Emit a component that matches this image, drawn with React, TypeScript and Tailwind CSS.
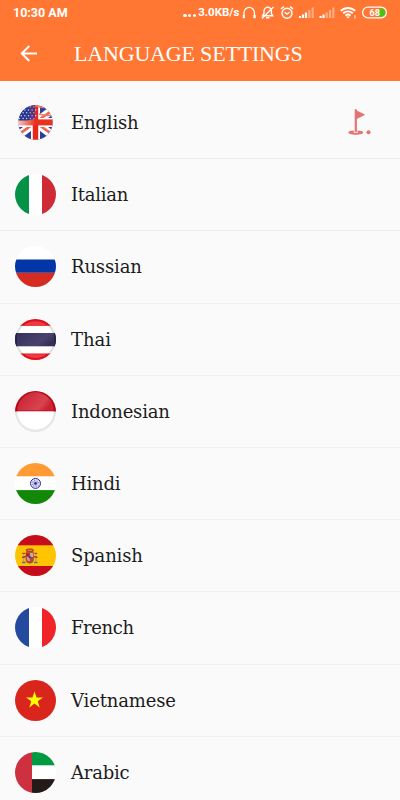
import React from "react";

interface Language {
  name: string;
  flag: React.ReactNode;
  tracking: string;
  selected?: boolean;
}

interface FlagProps {
  id: string;
  r?: number;
  children: React.ReactNode;
}

// Every flag is drawn on a 41x41 canvas and clipped to a circle
const Flag: React.FC<FlagProps> = ({ id, r = 20.5, children }) => (
  <svg width="41" height="41" viewBox="0 0 41 41" className="shrink-0">
    <defs>
      <clipPath id={id}>
        <circle cx="20.5" cy="20.5" r={r} />
      </clipPath>
    </defs>
    <g clipPath={`url(#${id})`}>{children}</g>
  </svg>
);

const STARS = Array.from({ length: 25 }, (_, i) => ({
  x: 4.5 + (i % 5) * 3.6 + (Math.floor(i / 5) % 2) * 1.8,
  y: 5 + Math.floor(i / 5) * 2.9,
}));

const EnglishFlag = () => (
  <Flag id="flag-en" r={17.2}>
    <defs>
      <linearGradient id="en-fade" x1="0" y1="0" x2="1" y2="0">
        <stop offset="0.05" stopColor="#f7cfc5" />
        <stop offset="0.5" stopColor="#e8321f" />
      </linearGradient>
    </defs>
    <rect width="41" height="41" fill="#2b3f9b" />
    <path d="M20.5 20.5 41 5M20.5 20.5 41 36M20.5 20.5 0 36" stroke="#fff" strokeWidth="8" />
    <path d="M20.5 20 41 6M20.5 20.5 41 35M20.5 20.5 0 35" stroke="#f0644f" strokeWidth="2.5" />
    <path d="M20.5 0v41M0 20.5h41" stroke="#fff" strokeWidth="9" />
    <path d="M20.5 0v41" stroke="#e92619" strokeWidth="5.4" />
    <path d="M20 3.5q8 3 17 2M24 12q6 2 14 1" fill="none" stroke="#ef7a6b" strokeWidth="1.6" />
    <rect y="17.4" width="41" height="6" fill="url(#en-fade)" />
    <path d="M3 2h17v15L12 18.5H3Z" fill="#27378f" />
    {STARS.map((s) => (
      <circle key={`${s.x}-${s.y}`} cx={s.x} cy={s.y} r="0.75" fill="#cdd5f4" />
    ))}
    <path d="M15 3h5v14h-5z" fill="#a3355e" opacity="0.35" />
  </Flag>
);

const ItalianFlag = () => (
  <Flag id="flag-it">
    <rect width="41" height="41" fill="#fff" />
    <rect width="14" height="41" fill="#059247" />
    <rect x="27" width="14" height="41" fill="#ce2b37" />
  </Flag>
);

const RussianFlag = () => (
  <Flag id="flag-ru">
    <rect width="41" height="41" fill="#fff" />
    <rect y="13.5" width="41" height="13.3" fill="#0036a7" />
    <rect y="26.8" width="41" height="14.2" fill="#d62b20" />
  </Flag>
);

const ThaiFlag = () => (
  <Flag id="flag-th">
    <defs>
      <linearGradient id="th-shine" x1="0" y1="0" x2="1" y2="0.4">
        <stop offset="0" stopColor="#34305a" />
        <stop offset="0.75" stopColor="#494370" />
        <stop offset="1" stopColor="#383258" />
      </linearGradient>
    </defs>
    <rect width="41" height="41" fill="#fff" />
    <circle cx="20.5" cy="20.5" r="19.5" fill="none" stroke="#dedede" strokeWidth="2" />
    <rect width="41" height="6.8" fill="#df101b" />
    <rect y="34.5" width="41" height="7" fill="#df101b" />
    <path d="M9.5 6A18 18 0 0 1 31.5 6ZM9.5 35.3a18 18 0 0 0 22 0Z" fill="#ef3a46" />
    <rect y="14" width="41" height="13.3" fill="url(#th-shine)" />
    <path d="M1 14v13.3M40 14v13.3" stroke="#292448" strokeWidth="2" />
  </Flag>
);

const IndonesianFlag = () => (
  <Flag id="flag-id">
    <defs>
      <linearGradient id="id-shine" x1="0" y1="0" x2="1" y2="0.4">
        <stop offset="0" stopColor="#c51f31" />
        <stop offset="0.8" stopColor="#d94350" />
        <stop offset="1" stopColor="#cd2435" />
      </linearGradient>
    </defs>
    <rect width="41" height="41" fill="#e6e6e6" />
    <rect width="41" height="20.5" fill="#b90617" />
    <path d="M2.3 19.5a18.2 18.2 0 0 1 36.4 0Z" fill="url(#id-shine)" />
    <path d="M2.3 20.5a18.2 18.2 0 0 0 36.4 0Z" fill="#fff" />
  </Flag>
);

const HindiFlag = () => (
  <Flag id="flag-hi">
    <rect width="41" height="41" fill="#fff" />
    <rect width="41" height="13.3" fill="#ff9a35" />
    <rect y="27.1" width="41" height="14" fill="#138808" />
    <circle cx="20.5" cy="20.4" r="5" fill="#eeeefa" stroke="#2a2a9c" />
    <circle cx="20.5" cy="20.4" r="2.5" fill="none" stroke="#8585c9" strokeWidth="3" strokeDasharray="0.6 0.7" />
    <circle cx="20.5" cy="20.4" r="1.3" fill="#2a2a9c" />
  </Flag>
);

const SpanishFlag = () => (
  <Flag id="flag-es">
    <rect width="41" height="41" fill="#ffc400" />
    <rect width="41" height="10.3" fill="#c60b1e" />
    <rect y="31" width="41" height="11" fill="#c60b1e" />
    <path d="M8.6 18v9M20.8 18v9" stroke="#b9a47a" strokeWidth="1.5" />
    <path d="M7 27.5h3.5M19 27.5h3.5" stroke="#596b96" strokeWidth="1.4" />
    <path d="M7 22.5l4-1M22.5 22.5l-4-1M7.3 18.3h2.8M19.4 18.3h2.8" stroke="#ba3b25" strokeWidth="1.3" />
    <path d="M11 17.5h7.5v7a3.7 3.7 0 0 1-7.5 0Z" fill="#bd4339" stroke="#98502b" strokeWidth="0.7" />
    <path d="M15 18h3.2v4H15zM11.5 22h3.3v4h-2z" fill="#d4a59d" />
    <path d="M11.4 18.3h3v3h-3z" fill="#b02428" />
    <circle cx="14.8" cy="22.3" r="1.2" fill="#394a9b" />
    <path d="M11.5 17l-1-2.3 2.2-1.2h4.2l2.2 1.2-1 2.3Z" fill="#b14325" />
    <path d="M12.5 15.3h4.7" stroke="#e9ad39" strokeWidth="0.8" />
  </Flag>
);

const FrenchFlag = () => (
  <Flag id="flag-fr">
    <rect width="41" height="41" fill="#fff" />
    <rect width="14" height="41" fill="#244aa0" />
    <rect x="27" width="14" height="41" fill="#ef2328" />
  </Flag>
);

const VietnameseFlag = () => (
  <Flag id="flag-vi">
    <rect width="41" height="41" fill="#da251d" />
    <path d="M19.5 11.2l2 6.2H28l-5.3 3.8 2 6.3-5.2-3.9-5.2 3.9 2-6.3-5.3-3.8h6.5Z" fill="#ff0" />
  </Flag>
);

const ArabicFlag = () => (
  <Flag id="flag-ar">
    <rect width="41" height="41" fill="#fff" />
    <rect x="17" width="24" height="13.3" fill="#009a42" />
    <rect x="17" y="27.1" width="24" height="14" fill="#241a18" />
    <rect width="17" height="41" fill="#cd303e" />
  </Flag>
);

const LANGUAGES: Language[] = [
  { name: "English", flag: <EnglishFlag />, tracking: "tracking-[-0.15px]", selected: true },
  { name: "Italian", flag: <ItalianFlag />, tracking: "tracking-[-0.25px]" },
  { name: "Russian", flag: <RussianFlag />, tracking: "tracking-[-0.15px]" },
  { name: "Thai", flag: <ThaiFlag />, tracking: "tracking-[0px]" },
  { name: "Indonesian", flag: <IndonesianFlag />, tracking: "tracking-[-0.2px]" },
  { name: "Hindi", flag: <HindiFlag />, tracking: "tracking-[-0.2px]" },
  { name: "Spanish", flag: <SpanishFlag />, tracking: "tracking-[-0.15px]" },
  { name: "French", flag: <FrenchFlag />, tracking: "tracking-[-0.4px]" },
  { name: "Vietnamese", flag: <VietnameseFlag />, tracking: "tracking-[-0.15px]" },
  { name: "Arabic", flag: <ArabicFlag />, tracking: "tracking-[-0.2px]" },
];

const BackIcon = () => (
  <svg width="18" height="18" viewBox="0 0 18 18" fill="none" stroke="#fff" strokeWidth="2">
    <path d="M17 8.5H2.5M9.3 1 1.8 8.5 9.3 16" />
  </svg>
);

const GolfFlagIcon = () => (
  <svg width="24" height="27" viewBox="0 0 24 27" fill="#e57373">
    <path d="M8.8 1 18.2 5.8 8.8 10.4Z" />
    <path d="M8.8.3v23" stroke="#e57373" strokeWidth="2.2" />
    <path d="M6.8 21.4C3.5 21.4 1.4 22.2 1.4 23.5s2.8 2.2 7.4 2.2 7.4-.9 7.4-2.2-2.3-2.1-5.6-2.1V24H6.8Z" />
    <circle cx="21.5" cy="23.2" r="2" />
  </svg>
);

const StatusIcons = () => (
  <svg width="147" height="16" viewBox="241 5 147 16" fill="none" stroke="#fff" strokeWidth="1.2">
    {/* Headphones */}
    <path d="M244 18v-5.4a5.2 5.2 0 0 1 10.4 0V18" strokeWidth="1.3" />
    <path d="M243.8 15v3.2M254.6 15v3.2" strokeWidth="2.2" />
    {/* Muted bell */}
    <path
      d="M262.6 15.8h10.2l-1.4-2.2V11a3.7 3.7 0 0 0-7.4 0v2.6ZM266 17.8h3.4M262 18.4 273.5 7"
      strokeWidth="1.4"
    />
    {/* Alarm */}
    <circle cx="287" cy="13.2" r="5" strokeWidth="1.4" />
    <path d="M284.6 12.2l2.3 1.9 2.7-1.9M280.9 9l3-2.4M293.1 9l-3-2.4" strokeWidth="1.4" />
    {/* Signal strength */}
    <path d="M300 16v2M303 14.5V18M306 12.5V18" strokeWidth="2.2" />
    <path d="M309.3 10v8M312.7 7.5V18" strokeWidth="2.2" opacity="0.4" />
    <path d="M320.5 16v2M323.5 14.5V18" strokeWidth="2.2" />
    <path d="M326.7 12.5V18M330 10v8M333.3 7.5V18" strokeWidth="2.2" opacity="0.4" />
    {/* Wifi */}
    <path
      d="M340.8 10.8a10.6 10.6 0 0 1 14.4 0M343.2 13.3a7 7 0 0 1 9.6 0M345.5 15.6a3.7 3.7 0 0 1 5 0"
      strokeWidth="1.9"
    />
    <path d="M346.5 16.8h3L348 18.3Z" fill="#fff" strokeWidth="0.5" />
    <path d="M355 15.2v3.4" strokeWidth="1.2" opacity="0.8" />
    {/* Battery */}
    <path d="M378 8.7h3.5a3.9 3.9 0 0 1 0 7.8H378Z" fill="#47c516" stroke="none" />
    <rect x="362.6" y="7.2" width="23.8" height="10.6" rx="5.3" />
    <text x="369.6" y="15.9" fill="#fff" stroke="none" fontFamily="Roboto, sans-serif" fontSize="9" fontWeight="700">
      68
    </text>
  </svg>
);

export default function App() {
  return (
    <div className="h-[800px] w-[400px] overflow-hidden bg-[#fafafa]">
      <header className="h-[81px] bg-[#ff7733] text-white">
        <div className="flex h-[26px] items-center pl-[13px] font-['Roboto',sans-serif] font-bold">
          <span className="w-[169px] text-[12.5px]">10:30 AM</span>
          <span className="flex w-[59px] items-center gap-[2px] text-[11.5px] whitespace-nowrap">
            <span className="flex shrink-0 gap-[1.2px] pt-[5px] pl-[1px]">
              <span className="size-[3.6px] rounded-full bg-white" />
              <span className="size-[3.6px] rounded-full bg-white" />
              <span className="size-[3.6px] rounded-full bg-white" />
            </span>
            3.0KB/s
          </span>
          <StatusIcons />
        </div>
        <div className="flex h-[55px] items-center pl-5">
          <BackIcon />
          <h1 className="pl-9 font-['Liberation_Serif',serif] text-[22px] leading-none tracking-[-0.18px] whitespace-nowrap">
            LANGUAGE SETTINGS
          </h1>
        </div>
      </header>

      <ul className="pt-[6px]">
        {LANGUAGES.map((lang) => (
          <li
            key={lang.name}
            className="flex h-[72.2px] items-center border-b border-[#efefef] pr-[29px] pl-[15px]"
          >
            {lang.flag}
            <span
              className={`flex-1 pl-[15px] font-['DejaVu_Serif',serif] text-[18px] text-[#1c1c1c] ${lang.tracking}`}
            >
              {lang.name}
            </span>
            {lang.selected && <GolfFlagIcon />}
          </li>
        ))}
      </ul>
    </div>
  );
}
